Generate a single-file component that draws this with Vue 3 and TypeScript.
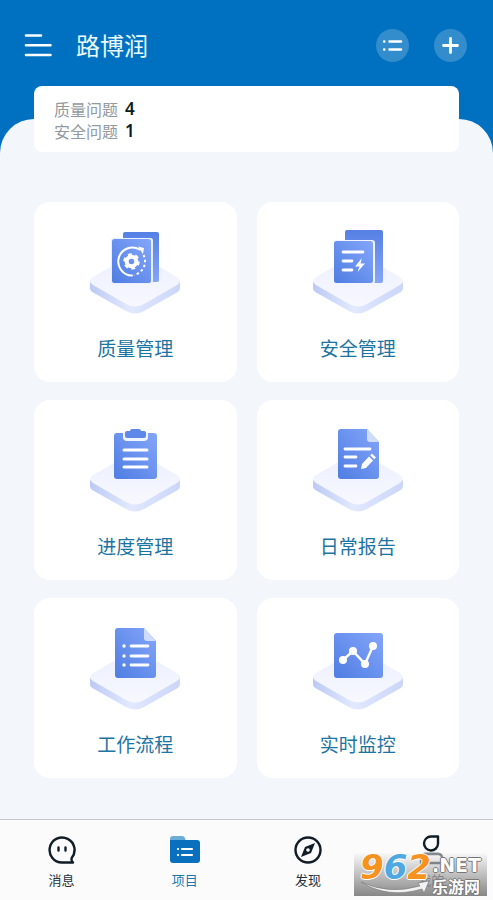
<script setup lang="ts">
import { ref } from 'vue'

interface Issue {
  label: string
  count: number
}
interface Module {
  id: string
  label: string
}

const issues: Issue[] = [
  { label: '质量问题', count: 4 },
  { label: '安全问题', count: 1 },
]

const modules: Module[] = [
  { id: 'quality', label: '质量管理' },
  { id: 'safety', label: '安全管理' },
  { id: 'progress', label: '进度管理' },
  { id: 'report', label: '日常报告' },
  { id: 'workflow', label: '工作流程' },
  { id: 'monitor', label: '实时监控' },
]

const tabs: Module[] = [
  { id: 'message', label: '消息' },
  { id: 'project', label: '项目' },
  { id: 'discover', label: '发现' },
  { id: 'mine', label: '我的' },
]

const activeTab = ref('project')
</script>

<template>
  <div class="app">
    <svg class="defs" width="0" height="0" aria-hidden="true">
      <defs>
        <linearGradient id="sheet" x1="1" y1="0" x2="0" y2="1">
          <stop offset="0" stop-color="#84a6fa" />
          <stop offset="1" stop-color="#4f7de2" />
        </linearGradient>
        <linearGradient id="back" x1="0" y1="0" x2="0" y2="1">
          <stop offset="0" stop-color="#5580e4" />
          <stop offset="1" stop-color="#85a6f8" />
        </linearGradient>
        <linearGradient id="plate" x1="0" y1="0" x2="0" y2="1">
          <stop offset="0" stop-color="#eceffe" />
          <stop offset="1" stop-color="#f7f8ff" />
        </linearGradient>
        <linearGradient id="edge" x1="0" y1="0" x2="1" y2="0">
          <stop offset="0" stop-color="#bccaf3" />
          <stop offset="0.45" stop-color="#e2e9ff" />
          <stop offset="0.65" stop-color="#d8e1fd" />
          <stop offset="1" stop-color="#cbd6f8" />
        </linearGradient>
      </defs>
    </svg>

    <header class="header">
      <div class="bar">
        <button class="icon-button" type="button" aria-label="菜单">
          <svg width="28" height="24" viewBox="0 0 28 24" fill="none" stroke="#fff" stroke-width="2.6" stroke-linecap="round">
            <path d="M2 2.5h15M2 12.3h24.5M2 22h24.5" />
          </svg>
        </button>
        <h1 class="title">路博润</h1>
        <button class="round" type="button" aria-label="列表">
          <svg width="33" height="33" viewBox="0 0 33 33" fill="none" stroke="#fff" stroke-width="2.6" stroke-linecap="round">
            <path d="M13.5 12.5h11.5M13.5 20.5h11.5" />
            <path d="M8.2 12.5h.1M8.2 20.5h.1" />
          </svg>
        </button>
        <button class="round" type="button" aria-label="添加">
          <svg width="33" height="33" viewBox="0 0 33 33" fill="none" stroke="#fff" stroke-width="2.8" stroke-linecap="round">
            <path d="M9.5 16.5h14M16.5 9.5v14" />
          </svg>
        </button>
      </div>
      <section class="summary">
        <p v-for="issue in issues" :key="issue.label" class="issue">
          <span>{{ issue.label }}</span>
          <strong>{{ issue.count }}</strong>
        </p>
      </section>
    </header>

    <main class="panel">
      <div class="grid">
        <button v-for="item in modules" :key="item.id" class="card" type="button">
          <svg width="92" height="90" viewBox="0 0 92 90" fill="none" aria-hidden="true">
            <path d="M1 54V60Q1 63 5 65L37 83Q46 88 55 83L87 65Q91 63 91 60V54Z" fill="url(#edge)" />
            <path d="M4 49L37 30Q46 25 55 30L88 49Q94 53 88 57L55 76Q46 81 37 76L4 57Q-2 53 4 49Z" fill="url(#plate)" />

            <g v-if="item.id === 'quality'">
              <rect x="34" y="4" width="36" height="50" rx="2" fill="url(#back)" />
              <rect x="22" y="10" width="42" height="46" rx="2.5" fill="#e8efff" />
              <rect x="23" y="11" width="39" height="44" rx="2.5" fill="url(#sheet)" />
              <path d="M43 47.5A14 14 0 1 1 50.5 21.5" stroke="#fff" stroke-width="2" stroke-linecap="round" />
              <path d="M49 18.5L55 20L54 26Z" fill="#fff" />
              <path d="M54.5 27A14 14 0 0 1 45 47" stroke="#fff" stroke-width="2" stroke-dasharray="2.5 2.5" />
              <circle cx="42.5" cy="33.5" r="4.8" stroke="#fff" stroke-width="4" />
              <circle cx="42.5" cy="33.5" r="7" stroke="#fff" stroke-width="2.5" stroke-dasharray="3.8 3.53" />
            </g>

            <g v-else-if="item.id === 'safety'">
              <rect x="33" y="2" width="38" height="53" rx="2" fill="url(#back)" />
              <rect x="22" y="12" width="41" height="44" rx="3" fill="#f2f5ff" />
              <rect x="22" y="13" width="39" height="42" rx="2.5" fill="url(#sheet)" />
              <path d="M31 24H51M31 33H40M31 42H40" stroke="#fff" stroke-width="2.8" stroke-linecap="round" />
              <path d="M50 30L43 38.5H47.5L45.5 44L53 35.5H48.5Z" fill="#fff" />
            </g>

            <g v-else-if="item.id === 'progress'">
              <rect x="25" y="7" width="43" height="46" rx="3" fill="url(#sheet)" />
              <path d="M34 6V11Q34 15 38 15H55Q59 15 59 11V6Z" fill="#f0f4ff" />
              <path d="M36 7Q36 5 38 5H41Q41 3 43 3H50Q52 3 52 5H55Q57 5 57 7V10Q57 12 55 12H38Q36 12 36 10Z" fill="#5e88e8" />
              <path d="M35 24H58M35 33H58M35 41H58" stroke="#fff" stroke-width="3" stroke-linecap="round" />
            </g>

            <g v-else-if="item.id === 'report'">
              <path d="M29 3H55L67 16V50Q67 53 64 53H29Q26 53 26 50V6Q26 3 29 3Z" fill="url(#sheet)" />
              <path d="M55 3L67 16H58Q55 16 55 13Z" fill="#cfdcfc" />
              <path d="M33 23H58M33 31H44M33 40H44" stroke="#fff" stroke-width="2.8" stroke-linecap="round" />
              <path d="M49 43L50 38L57 30.5L61 34.5L54 42ZM58.2 29.3L60 27.5L64 31.5L62.2 33.3Z" fill="#fff" />
            </g>

            <g v-else-if="item.id === 'workflow'">
              <path d="M29 4H55L67 17V51Q67 54 64 54H29Q26 54 26 51V7Q26 4 29 4Z" fill="url(#sheet)" />
              <path d="M55 4L67 17H58Q55 17 55 14Z" fill="#cfdcfc" />
              <path d="M42 22H59M42 32H59M42 41H59" stroke="#fff" stroke-width="2.8" stroke-linecap="round" />
              <path d="M35 22h.1M35 32h.1M35 41h.1" stroke="#fff" stroke-width="3.4" stroke-linecap="round" />
            </g>

            <g v-else>
              <rect x="22" y="9" width="49" height="45" rx="3" fill="url(#sheet)" />
              <path d="M31 36L41 27L53 40L61 22" stroke="#fff" stroke-width="2.4" />
              <g fill="#fff">
                <circle cx="31" cy="36" r="4" />
                <circle cx="41" cy="27" r="4" />
                <circle cx="53" cy="40" r="4" />
                <circle cx="61" cy="22" r="4" />
              </g>
            </g>
          </svg>
          <span>{{ item.label }}</span>
        </button>
      </div>
    </main>

    <nav class="tabs">
      <button
        v-for="tab in tabs"
        :key="tab.id"
        class="tab"
        :class="{ active: tab.id === activeTab }"
        type="button"
        @click="activeTab = tab.id"
      >
        <svg width="32" height="30" viewBox="0 0 32 30" fill="none" stroke="#101c26" aria-hidden="true">
          <g v-if="tab.id === 'message'" stroke-width="2.4" stroke-linecap="round" stroke-linejoin="round">
            <path d="M25.7 23A12.5 12.5 0 1 0 16 27.5H27Q25 26 25.700 23A12.500 12.500 0 0 0 28.500 15" />
            <path d="M12.500 12.500V15.500M19.500 12.500V15.500" />
          </g>
          <g v-else-if="tab.id === 'project'" stroke="none">
            <path d="M1 4Q1 1 4 1H13Q15 1 16 3L17 7H1Z" fill="#6cadd8" />
            <path d="M1 5H28Q31 5 31 8V25Q31 28 28 28H4Q1 28 1 25Z" fill="#0a70bd" />
            <path d="M13 14H23M13 20H23M9 14h.1M9 20h.1" stroke="#fff" stroke-width="2.2" stroke-linecap="round" />
          </g>
          <g v-else-if="tab.id === 'discover'">
            <circle cx="16" cy="15" r="12.5" stroke-width="2.4" />
            <path d="M23 8L19 18L9 22L13 12Z" fill="#101c26" stroke="none" />
            <circle cx="16" cy="15" r="1.8" fill="#fff" stroke="none" />
          </g>
          <g v-else stroke-width="2.4">
            <path d="M16 1.500H23V9A7 7 0 1 1 16 1.500Z" stroke-linejoin="round" />
            <path d="M6 28V23Q6 19 10 19H23Q27 19 27 23V28Z" />
          </g>
        </svg>
        <span>{{ tab.label }}</span>
      </button>

      <div class="watermark">
        <svg class="swoosh" width="133" height="43" viewBox="0 0 133 43" aria-hidden="true">
          <path d="M7 29Q35 42 66 33L64 30L75 28L70 40L68 36Q34 46 7 29Z" fill="#f2f2f2" stroke="#777" stroke-width="0.6" />
        </svg>
        <span class="digits"><i class="orange">9</i><i class="sky">6</i><i class="orange">2</i></span>
        <span class="site"><b>.NET</b><b class="name">乐游网</b></span>
      </div>
    </nav>
  </div>
</template>

<style>
body {
  margin: 0;
}
</style>

<style scoped>
.app {
  display: flex;
  flex-direction: column;
  min-height: 100vh;
  background: #0071c1;
  font-family: 'Noto Sans CJK SC', 'Noto Sans', sans-serif;
}

.defs {
  position: absolute;
}

button {
  margin: 0;
  padding: 0;
  border: 0;
  background: none;
  font: inherit;
  cursor: pointer;
}

svg {
  display: block;
}

.header {
  position: relative;
  z-index: 1;
  padding: 28px 34px 0;
}

.bar {
  display: flex;
  align-items: center;
  height: 34px;
  margin: 0 -8px 24px -10px;
}

.title {
  flex: 1;
  margin: 0 0 0 24px;
  color: #e9fbff;
  font-size: 24px;
  font-weight: 400;
  line-height: 34px;
}

.round {
  border-radius: 50%;
  background: #338dcd;
}

.round + .round {
  margin-left: 25px;
}

.summary {
  padding: 12px 20px 10px;
  border-radius: 8px;
  background: #fff;
}

.issue {
  display: flex;
  gap: 7px;
  margin: 0;
  color: #929a9f;
  font-size: 16px;
  line-height: 22px;
}

.issue strong {
  color: #0c1a22;
  font-family: 'Noto Sans', sans-serif;
  font-size: 17px;
  font-weight: 600;
}

.panel {
  flex: 1;
  margin-top: -33px;
  padding: 83px 34px 41px;
  border-radius: 34px 34px 0 0;
  background: #f3f7fb;
}

.grid {
  display: grid;
  grid-template-columns: 1fr 1fr;
  gap: 18px 20px;
}

.card {
  display: flex;
  flex-direction: column;
  align-items: center;
  gap: 16px;
  padding: 26px 0 20px;
  border-radius: 16px;
  background: #fff;
  color: #1c74a2;
  font-size: 19px;
  line-height: 28px;
}

.tabs {
  position: relative;
  display: grid;
  grid-template-columns: repeat(4, 1fr);
  border-top: 1px solid #c4c6c9;
  background: #fbfbfc;
}

.tab {
  display: flex;
  flex-direction: column;
  align-items: center;
  gap: 5px;
  padding: 15px 0 12px;
  color: #24323b;
  font-size: 13px;
  line-height: 20px;
}

.tab.active {
  color: #1b78ae;
}

.watermark {
  position: absolute;
  right: 6px;
  bottom: 6px;
  display: flex;
  width: 133px;
  height: 43px;
  background: linear-gradient(rgba(245, 245, 245, 0.5), rgba(125, 125, 125, 0.92));
  pointer-events: none;
}

.swoosh {
  position: absolute;
}

.digits {
  position: relative;
  width: 78px;
  padding-left: 6px;
  box-sizing: border-box;
  font-family: 'DejaVu Sans', sans-serif;
  font-size: 34px;
  font-weight: 700;
  line-height: 28px;
  white-space: nowrap;
  text-shadow: 1px 0 #fff, -1px 0 #fff, 0 1px #fff, 0 -1px #fff;
}

.orange {
  color: #f7921e;
}

.sky {
  color: #50a8e0;
}

.site {
  position: relative;
  display: flex;
  flex-direction: column;
  color: #fff;
  font-family: 'DejaVu Sans', sans-serif;
  font-size: 19px;
  line-height: 24px;
  text-shadow: 1px 0 #777, -1px 0 #777, 0 1px #777, 0 -1px #777;
}

.name {
  font-family: 'Noto Sans CJK SC', sans-serif;
  font-size: 16px;
  line-height: 18px;
}
</style>
